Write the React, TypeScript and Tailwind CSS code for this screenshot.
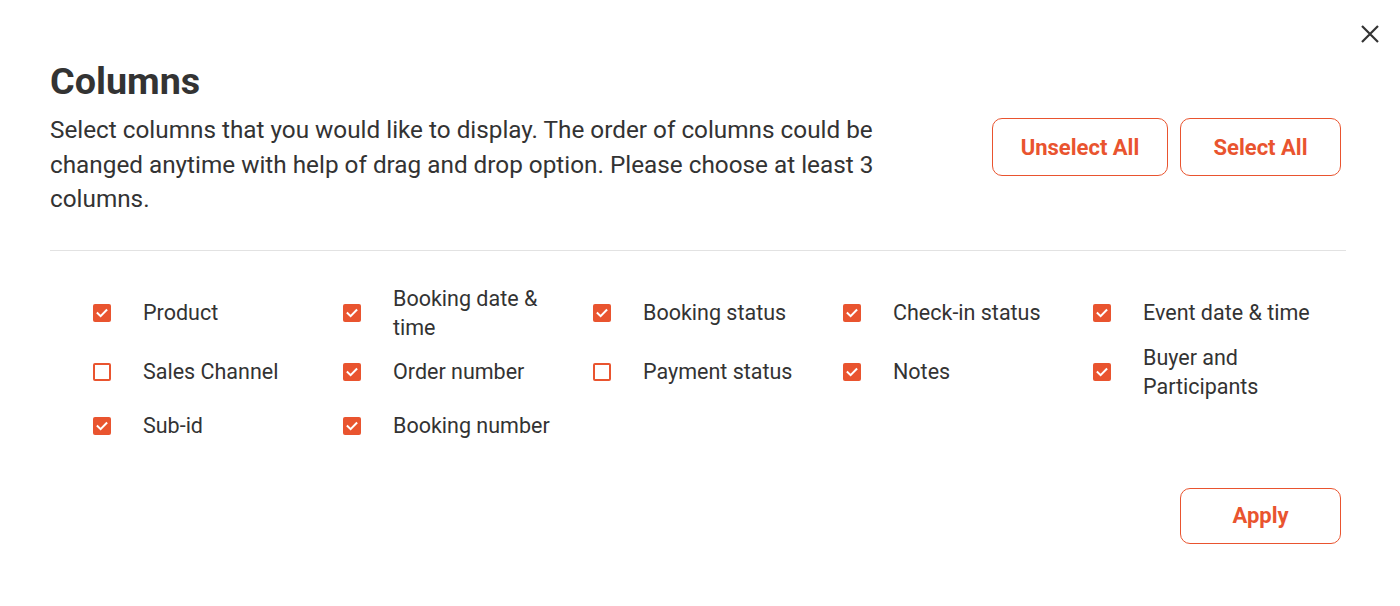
import React, { useState } from "react";

const ITEMS: { label: string; checked: boolean }[] = [
  { label: "Product", checked: true },
  { label: "Booking date & time", checked: true },
  { label: "Booking status", checked: true },
  { label: "Check-in status", checked: true },
  { label: "Event date & time", checked: true },
  { label: "Sales Channel", checked: false },
  { label: "Order number", checked: true },
  { label: "Payment status", checked: false },
  { label: "Notes", checked: true },
  { label: "Buyer and Participants", checked: true },
  { label: "Sub-id", checked: true },
  { label: "Booking number", checked: true },
];

function Box({ checked }: { checked: boolean }) {
  if (checked) {
    return (
      <div className="w-[18px] h-[18px] rounded-[2px] bg-[#e9542f] flex items-center justify-center shrink-0">
        <svg width="14" height="14" viewBox="0 0 14 14" fill="none">
          <path d="M2.6 7.2 L5.6 10.1 L11.4 4.2" stroke="#ffffff" strokeWidth="2" strokeLinecap="square" />
        </svg>
      </div>
    );
  }
  return <div className="w-[18px] h-[18px] rounded-[2px] border-2 border-[#e9542f] bg-white shrink-0" />;
}

export default function App() {
  const [items, setItems] = useState(ITEMS);
  const toggle = (i: number) =>
    setItems((prev) => prev.map((it, j) => (j === i ? { ...it, checked: !it.checked } : it)));

  return (
    <div className="relative w-[1400px] h-[606px] bg-white text-[#333333]" style={{ fontFamily: "Roboto, 'Liberation Sans', sans-serif" }}>
      <button className="absolute left-[1361px] top-[25px] w-[18px] h-[18px]" aria-label="Close">
        <svg width="18" height="18" viewBox="0 0 18 18" fill="none">
          <path d="M1 1 L17 17 M17 1 L1 17" stroke="#333333" strokeWidth="2.2" />
        </svg>
      </button>
      <div className="pl-[50px] pr-[54px] pt-[59px]">
        <h1 className="text-[37.7px] leading-[44px] font-bold text-[#333333]">Columns</h1>
        <div className="flex justify-between items-start mt-[10px]">
          <p className="w-[850px] text-[24.3px] leading-[34.5px] text-[#333333]">
            Select columns that you would like to display. The order of columns could be changed anytime with help of drag and drop option. Please choose at least 3 columns.
          </p>
          <div className="flex gap-[12px] mt-[5px] mr-[5px]">
            <button className="w-[176px] h-[58px] rounded-[10px] border border-[#e9542f] text-[#e9542f] text-[22px] font-bold">
              Unselect All
            </button>
            <button className="w-[161px] h-[58px] rounded-[10px] border border-[#e9542f] text-[#e9542f] text-[22px] font-bold">
              Select All
            </button>
          </div>
        </div>
        <div className="mt-[33px] h-px bg-[#e2e2e2]" />
        <div className="mt-[33px] ml-[43px] grid grid-cols-[repeat(5,250px)] gap-y-px">
          {items.map((it, i) => (
            <div key={it.label} className="flex items-center min-h-[48px] cursor-pointer" onClick={() => toggle(i)}>
              <Box checked={it.checked} />
              <span className="ml-[32px] w-[180px] text-[21.5px] leading-[29px] text-[#333333]">{it.label}</span>
            </div>
          ))}
        </div>
        <div className="flex justify-end mt-[38px] mr-[5px]">
          <button className="w-[161px] h-[56px] rounded-[10px] border border-[#e9542f] text-[#e9542f] text-[22px] font-bold">
            Apply
          </button>
        </div>
      </div>
    </div>
  );
}
